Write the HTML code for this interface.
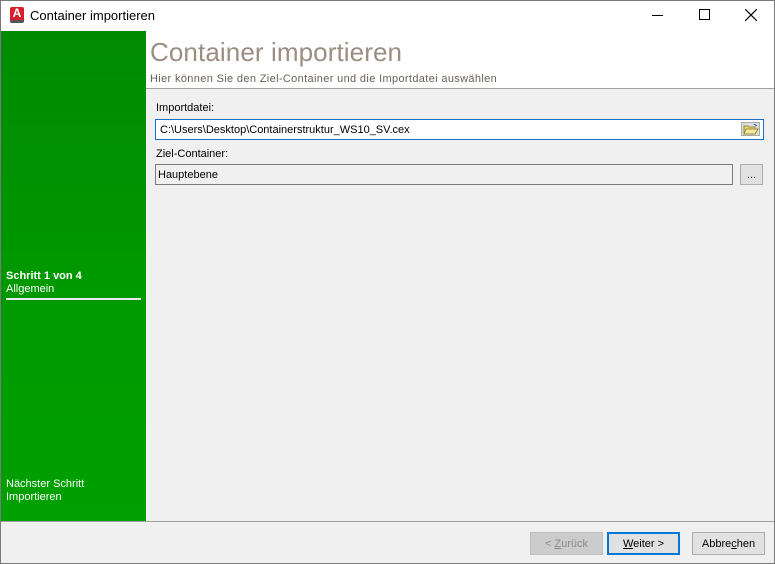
<!DOCTYPE html>
<html><head><style>
*{margin:0;padding:0;box-sizing:border-box}
body{width:775px;height:564px;position:relative;background:#f0f0f0;font-family:"Liberation Sans",sans-serif;font-size:12px;overflow:hidden}
.abs{position:absolute}
</style></head><body>
<div class="abs" style="left:0;top:0;width:775px;height:564px;border:1px solid #7a7a7a"></div>
<div class="abs" style="left:1px;top:1px;width:773px;height:30px;background:#fff"></div>
<div class="abs" style="left:10px;top:7px;width:14px;height:16px;background:#d9202a;border-radius:2px;border-bottom:3px solid #555;color:#fff;font-weight:bold;font-size:12px;text-align:center;line-height:13px">A</div>
<div class="abs" style="left:30px;top:8px;font-size:13px;color:#000">Container importieren</div>
<div class="abs" style="left:652px;top:15px;width:11px;height:1px;background:#000"></div>
<div class="abs" style="left:699px;top:9px;width:11px;height:11px;border:1px solid #000"></div>
<svg class="abs" style="left:745px;top:9px" width="12" height="12"><path d="M0 0L12 12M12 0L0 12" stroke="#000" stroke-width="1.2"/></svg>
<div class="abs" style="left:1px;top:31px;width:145px;height:490px;background:linear-gradient(#008a00,#009800 50%,#00a000)"></div>
<div class="abs" style="left:146px;top:31px;width:628px;height:58px;background:#fff;border-bottom:1px solid #a0a0a0"></div>
<div class="abs" style="left:150px;top:37px;font-size:26px;color:#9a8e80;letter-spacing:0.1px">Container importieren</div>
<div class="abs" style="left:150px;top:73px;font-size:11px;color:#6a5f55;letter-spacing:0.35px">Hier können Sie den Ziel-Container und die Importdatei auswählen</div>
<div class="abs" style="left:6px;top:270px;color:#fff;font-size:11px;font-weight:bold">Schritt 1 von 4</div>
<div class="abs" style="left:6px;top:283px;color:#fff;font-size:11px">Allgemein</div>
<div class="abs" style="left:6px;top:298px;width:135px;height:2px;background:#e8e8e8"></div>
<div class="abs" style="left:6px;top:478px;color:#fff;font-size:11px">Nächster Schritt</div>
<div class="abs" style="left:6px;top:491px;color:#fff;font-size:11px">Importieren</div>
<div class="abs" style="left:156px;top:102px;font-size:11px">Importdatei:</div>
<div class="abs" style="left:155px;top:119px;width:609px;height:21px;background:#fff;border:1px solid #1a6fc6"></div>
<div class="abs" style="left:160px;top:124px;font-size:11px">C:\Users\Desktop\Containerstruktur_WS10_SV.cex</div>
<div class="abs" style="left:741px;top:122px;width:19px;height:14px;background:#ddd;border:1px solid #aaa"></div>
<svg class="abs" style="left:743px;top:123px" width="16" height="12"><path d="M1 3h4l1 1h6v7H1z" fill="#e8d870" stroke="#9a8a40"/><path d="M3 6h12l-3 5H1z" fill="#f4ea9a" stroke="#9a8a40"/><path d="M11 1l3 2" stroke="#3050c0"/></svg>
<div class="abs" style="left:156px;top:148px;font-size:11px">Ziel-Container:</div>
<div class="abs" style="left:155px;top:164px;width:578px;height:21px;background:#f0f0f0;border:1px solid #7a7a7a"></div>
<div class="abs" style="left:158px;top:169px;font-size:11px">Hauptebene</div>
<div class="abs" style="left:740px;top:164px;width:23px;height:21px;background:#e1e1e1;border:1px solid #adadad;text-align:center;font-size:11px;line-height:20px;color:#202060">...</div>
<div class="abs" style="left:1px;top:521px;width:773px;height:1px;background:#a0a0a0"></div>
<div class="abs" style="left:530px;top:532px;width:73px;height:23px;background:#ccc;border:1px solid #bfbfbf;color:#8a8a8a;text-align:center;line-height:22px;font-size:11px">&lt; <u>Z</u>urück</div>
<div class="abs" style="left:607px;top:532px;width:73px;height:23px;background:#e1e1e1;border:2px solid #0078d7;text-align:center;line-height:20px;font-size:11px"><u>W</u>eiter &gt;</div>
<div class="abs" style="left:692px;top:532px;width:73px;height:23px;background:#e1e1e1;border:1px solid #adadad;text-align:center;line-height:22px;font-size:11px">Abbre<u>c</u>hen</div>
</body></html>
